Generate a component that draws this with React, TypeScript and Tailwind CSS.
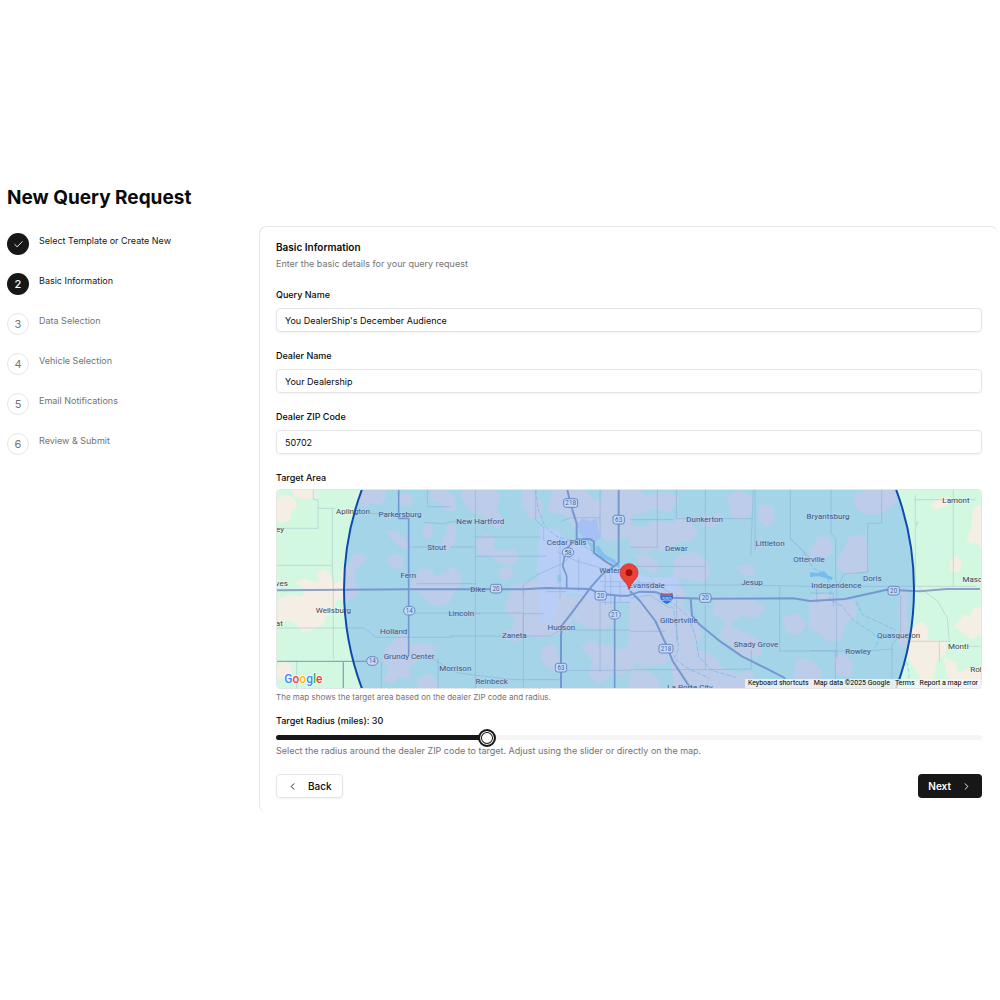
import { useState } from 'react'
import { Check, ChevronLeft, ChevronRight } from 'lucide-react'

type StepStatus = 'done' | 'current' | 'todo'

interface Step {
  id: number
  title: string
  status: StepStatus
}

const STEPS: Step[] = [
  { id: 1, title: 'Select Template or Create New', status: 'done' },
  { id: 2, title: 'Basic Information', status: 'current' },
  { id: 3, title: 'Data Selection', status: 'todo' },
  { id: 4, title: 'Vehicle Selection', status: 'todo' },
  { id: 5, title: 'Email Notifications', status: 'todo' },
  { id: 6, title: 'Review & Submit', status: 'todo' },
]

const MIN_RADIUS = 1
const MAX_RADIUS = 100

// Map geometry is in map units, three to a screen pixel
const UNITS_PER_MILE = 28.5

const TOWNS: [string, number, number][] = [
  ['Aplington', 249, 86],
  ['Parkersburg', 390, 96],
  ['Stout', 500, 196],
  ['Fern', 415, 280],
  ['Wellsburg', 190, 383],
  ['Holland', 371, 448],
  ['Grundy Center', 417, 523],
  ['Morrison', 556, 557],
  ['ey', 30, 140],
  ['ves', 35, 302],
  ['at', 28, 424],
  ['New Hartford', 631, 116],
  ['Cedar Falls', 890, 180],
  ['Waterloo', 1036, 264],
  ['Dike', 624, 320],
  ['Lincoln', 574, 392],
  ['Hudson', 874, 435],
  ['Zaneta', 733, 459],
  ['Reinbeck', 665, 597],
  ['Dunkerton', 1304, 110],
  ['Dewar', 1219, 198],
  ['Evansdale', 1130, 310],
  ['Gilbertville', 1226, 415],
  ['Jesup', 1446, 299],
  ['Littleton', 1500, 182],
  ['Otterville', 1617, 232],
  ['Shady Grove', 1458, 485],
  ['La Porte City', 1260, 614],
  ['Bryantsburg', 1674, 103],
  ['Independence', 1699, 310],
  ['Doris', 1807, 288],
  ['Quasqueton', 1886, 460],
  ['Rowley', 1764, 507],
  ['Lamont', 2058, 54],
  ['Masonville', 2135, 290],
  ['Monti', 2065, 493],
  ['Robinson', 2151, 561],
]

const SHIELDS: [string, number, number, boolean][] = [
  ['14', 418, 377, true],
  ['14', 307, 528, true],
  ['20', 678, 311, false],
  ['218', 902, 54, false],
  ['63', 1046, 104, false],
  ['58', 894, 202, true],
  ['20', 992, 332, false],
  ['21', 1034, 389, true],
  ['63', 873, 548, false],
  ['20', 1306, 339, false],
  ['218', 1188, 491, false],
  ['20', 1871, 317, false],
]

const FARMLAND = [
  'M20 45l25-12 25 8 8 22-16 14-4 26-22 8-16-6z',
  'M66 15h62l8 18-28 8-30-8z',
  'M82 292l20-8 36 10 14-8-8-22 20-8 16 16 4 22 22 2 12-12-4-28 22-14 14-30 26-6 12 16-22 20-14 14-2 40 16 16-12 24-24 8-34-4-6 36-22 14-10 26-36 18-24 4-22-28-26-8-22 10v-68l34-12 38 4 6-28z',
  'M20 552l22-20 18 8 2 34-42 4z',
  'M262 28l34-13h46l4 22-18 20-26-6-14 14-24-14z',
  'M352 140l28 2 26 24 4 22-22-6-24-24z',
  'M360 214l30-4 10 18-8 22-30-8-8-14z',
  'M380 42l26-18 22 16-8 22-30-4z',
  'M482 20l34-5 36 22 4 40-32-6-18-22-22-4z',
  'M462 130l18-10 6 28-14 12-12-14z',
  'M540 118l16 8-4 44-20 24-14-18 10-30z',
  'M454 252l28 4 14 24 28-16 34 4 6 36-20 26-8 22-34 10-30-14-18-24-40-16 22-28z',
  'M348 492l34-30 14-20 24 22-4 18 48-6 34 14-24 22-32 10-24 26-4 32-28-8-20 22-24-10 18-38-22-20z',
  'M444 580l34-10 26 26v14h-60z',
  'M580 15h92l16 20-12 38 26 36-20 20-38-34-46-24-24-40z',
  'M620 168l28-20 26 16-8 28 32 8 28-6 20 20-16 24-40-4-26-24-36-4z',
  'M540 250l22 6 10 28-12 26-20 4z',
  'M690 258l24-10 14 16-16 20-20-6z',
  'M760 20l34-5 22 50-8 38-30-10-22-34z',
  'M850 15h90l34 34 84-16v40l26 20-10 60-64 14-30-36-66-4-24-40-54-10z',
  'M726 304l82-18 70 30 30 48-8 66-52 20-44 6-40-14-44 6 18-48-32-22 10-36z',
  'M700 440l44-4 24 14-30 16-42-6z',
  'M822 490l28-12 14 40-6 36-30-12-14-30z',
  'M900 340l70-6 60 24 14 44-40 30-50-6-40-24z',
  'M938 486l20-16 28 10 38 2 30 18 26-14 10 60-36 22-28-14-18 28-24 10-24-22 12-42z',
  'M1000 15h96l34 20 60-14 34 18-24 38-60-8-40 18-58 8-44-30z',
  'M1080 124l42 6 34-20 54 10 18-24 36 22 18 22-18 26-50 6-18 26-44-8-24 12-48-20z',
  'M1214 220l58-16 34 20 14 38-20 28-52-12-38 4z',
  'M1082 294l50-14 90 6 20 40-6 44 36 30 20 44-8 34-54 20-44 34-62 10-48-20z',
  'M1086 552l40 6 36 24 4 28h-86z',
  'M1100 210l34 4 32 26-12 22-40-14z',
  'M1376 34l34-16 36 22-6 44-22 22-32-14z',
  'M1302 90l24 10 20-14 6 24-34 14-24-14z',
  'M1336 346l44-10 60 8 44 22-20 30-48-6-40 22-46-28z',
  'M1204 480l74 10 50 24 30 40 42 14 44-4 14 46h-244z',
  'M1370 416l40 24 54 26 10 40-50 14-42-44-34-24z',
  'M1402 250l34-10 18 20-24 12z',
  'M1474 60l34 8 4 42-24 12-22-28z',
  'M1540 400l38-14 28 30-18 30-36-4z',
  'M1620 200l28-44 28 4 10 34-20 26-38 12z',
  'M1620 340l40-14 40 14 52 12 4 40-32 22-16 54-36-4-28-24-24-10z',
  'M1722 196l20-40 42-4 10 40-6 64-54 12-36-30z',
  'M1756 30l40-15h76l8 32-22 20-26 16-34 4-40-20z',
  'M1690 520l34-10 22 30-6 32-38-4z',
  'M1580 522l44 6 30 30-8 50h-76z',
  'M1896 318l14 6-4 60 4 46 16 34-22 22-18-10 6-50-6-40z',
  'M1914 470l22-46 20-12 18 24-8 28 60 8-2 36-24 12-12 56-26 24-22-48-22-32z',
  'M1984 64l24-22 28-4-4 22-36 10z',
  'M2092 162l14-26 6-66 16-6 5 4v120l-20-24-10 10z',
  'M2040 236l18-22 14 16-4 26-22 2z',
  'M2056 424l28-34 16 10 12-28 21-4v76l-30 16-14-12z',
  'M2024 520l30 14 10 32 44-18 25 12v50h-70l-28-40z',
]

const COUNTY_ROADS = [
  'M20 130h124V70h52',
  'M130 15v28l14 2v26',
  'M187 70v180l3 50v222',
  'M20 241h166',
  'M300 86h90',
  'M20 429h262l36 28h230',
  'M418 186h54',
  'M440 296h180',
  'M418 384h144',
  'M80 530v80M334 530v80',
  'M504 520v90M472 15v50h70',
  'M460 112l58 4 40-8',
  'M616 15v595',
  'M616 156h195M540 186h76M616 214h214',
  'M760 386h60M540 386h90M760 312v140',
  'M540 384h220v225',
  'M540 453h300l30-18',
  'M490 523l70 40 60 8 110 13h142',
  'M760 330v-30l40-30 80-36 20-20',
  'M797 15v90l24 22 0 40M872 110l30-12h88v60',
  'M860 200l60 28 90 26M926 220v100M830 320h60M870 160v180',
  'M990 15v96M872 435h210M872 556h208M990 320v240',
  'M1006 270v90M1022 270v90M1050 290v60M990 290h80M990 352h90M1000 304h70',
  'M1162 15v174M1080 187h82M1080 244h226M1080 104h130',
  'M1219 15v86h230M1306 15v305M1455 15v180',
  'M1306 360v196M1220 330v140M1082 439h104',
  'M1132 300h300l187 4',
  'M1080 554h220l144-2v-56M1450 15l-8 200M1529 304v194',
  'M1080 340l60-10 60 40M1080 294h70l50 28',
  'M1561 15v146l52 50 20 24M1529 498h260l80-6',
  'M1620 304h500M1683 15v130l14 16v130',
  'M1700 290v230M1793 115v146l-70 6-20 36M1793 115h42V15',
  'M1620 497h76v112M1620 324h70v40M1640 304v50',
  'M1936 30v90l8-10-8 20v175M1936 44h180',
  'M2050 15v290M1920 469h118M2038 469l-6-70-30-52-56-40',
  'M2008 469v60M1866 610V480l16-20 10-20v-110M2090 484h40',
]

const RIVERS = [
  'M797 15l8 60 20 50 36 30 56 16 40 20 50 40 50 20 50 40 60 40 50 30 40 36 20 60 10 60 40 40 70 20',
  'M950 170l30 24 20 34 30 10 14 30',
  'M1170 340l40 30 8 50 8 70-14 30 48 34 60 26',
  'M1560 160l40 40 30 50 40 20 14 44-6 30 40 20 30 40 60 40 20 20-14 24',
  'M1758 350l20 40 50 22 50 24',
  'M1910 530l8 40-12 40',
]

function TownMap({ radius }: { radius: number }) {
  return (
    <svg
      viewBox="21 15 2112 594"
      preserveAspectRatio="xMidYMid slice"
      className="block h-full w-full"
      role="img"
      aria-label="Target area map"
    >
      <rect x="-2000" y="-500" width="6000" height="1700" fill="#d3f8e2" />
      <g fill="#f5eee4" stroke="#f5eee4" strokeWidth="6" strokeLinejoin="round">
        {FARMLAND.map((d) => (
          <path key={d} d={d} />
        ))}
      </g>

      {/* Cedar Falls / Waterloo built-up area */}
      <path
        d="M812 126l50 10 40 40 50-8 40 44 30 10 60 24 50 30h90v44h-70l-60 30-100 4-70-30-56 4-14 84h-42v-100l-10-60z"
        fill="#eef0f8"
      />
      <path d="M936 100l24 8 22-8 6 60-16 14-24-10-20-20-6-26z" fill="#d2dbf5" />
      <path d="M862 270h12v20h-12zM952 168l30 16 30 30-10 14-34-22z" fill="#b8ead6" />
      <path d="M1620 262l24 2 18-6 14 14 12 4-2 10-22-8-18-4-26 2z" fill="#8fd8ef" />
      <path d="M984 180l18 28 32 16 18 20-6 2-24-16-28-14-14-24z" fill="#9fdcee" />

      <g fill="none" stroke="#93d5e4" strokeWidth="3" strokeDasharray="14 5" opacity="0.8">
        {RIVERS.map((d) => (
          <path key={d} d={d} />
        ))}
      </g>
      <g fill="none" stroke="#a9bfc8" strokeWidth="2" opacity="0.8">
        {COUNTY_ROADS.map((d) => (
          <path key={d} d={d} />
        ))}
      </g>

      <g fill="none" stroke="#90a3c2" strokeWidth="6" strokeLinejoin="round">
        <path d="M20 316l400-3h340l70-4 130 3 30 14 60 6h25l35-12 50 2 40 16 106 3 264-1 50 8 105-6 125-28 100 5 80-7h100" />
        <path d="M386 15v85h30v412" strokeWidth="5" />
        <path d="M20 529h200v80M220 529h68" strokeWidth="4" />
        <path d="M892 15l12 50 16 50v48l40-1 12 8v34l36 26 22 14" />
        <path d="M1046 15v218l-18 14-32 22-32 36-60 80-28 36-3 30v158" />
        <path d="M920 163l-34 30-4 30-4 20 12 30v36" strokeWidth="5" />
        <path d="M1034 332v277" strokeWidth="5" />
        <path d="M1080 318l30 30 46 60 32 70 20 50 46 70 12 12" />
        <path d="M1262 342l4 50 20 24 60 50 70 48 80 40 50 26" />
      </g>

      {/* Interstate 380 */}
      <path d="M1171 329q19 5 38 0 4 18-19 28-23-10-19-28z" fill="#2f6bc5" />
      <path d="M1172 323q18 5 36 0v7q-18 4-36 0z" fill="#d0485a" />
      <text x="1190" y="347" fontSize="18" fill="#fff" textAnchor="middle" className="font-['Roboto',sans-serif]">
        380
      </text>

      {SHIELDS.map(([label, x, y, round]) => {
        const width = label.length > 2 ? 42 : 34
        return (
          <g key={`${label}-${x}`}>
            <rect
              x={x - width / 2}
              y={y - 13}
              width={width}
              height="26"
              rx={round ? 13 : 7}
              fill="#ffffff"
              stroke="#7c8aa6"
              strokeWidth="3"
            />
            <text
              x={x}
              y={y + 7}
              fontSize="19"
              fill="#4b5568"
              textAnchor="middle"
              className="font-['Roboto',sans-serif]"
            >
              {label}
            </text>
          </g>
        )
      })}

      <g
        fontSize="24"
        fill="#3f4148"
        stroke="#ffffff"
        strokeOpacity="0.35"
        strokeWidth="4"
        paintOrder="stroke"
        textAnchor="middle"
        className="font-['Roboto',sans-serif]"
      >
        {TOWNS.map(([name, x, y]) => (
          <text key={name} x={x} y={y}>
            {name}
          </text>
        ))}
      </g>

      <circle
        cx="1077"
        cy="312"
        r={radius * UNITS_PER_MILE}
        fill="#3b82f6"
        fillOpacity="0.3"
        stroke="#0f4aab"
        strokeWidth="6"
      />

      {/* Dealer pin */}
      <path
        d="M1077 314c-4-24-27-30-27-51a27 27 0 0 1 54 0c0 21-23 27-27 51z"
        fill="#ea4335"
        stroke="#c5221f"
        strokeWidth="2"
      />
      <circle cx="1077" cy="263" r="10" fill="#a50e0e" />

      <text
        x="43"
        y="594"
        fontSize="36"
        fontWeight="500"
        stroke="#ffffff"
        strokeWidth="4"
        paintOrder="stroke"
        className="font-['Roboto',sans-serif]"
      >
        <tspan fill="#4285f4">G</tspan>
        <tspan fill="#ea4335">o</tspan>
        <tspan fill="#fbbc05">o</tspan>
        <tspan fill="#4285f4">g</tspan>
        <tspan fill="#34a853">l</tspan>
        <tspan fill="#ea4335">e</tspan>
      </text>
    </svg>
  )
}

function StepMarker({ step }: { step: Step }) {
  if (step.status === 'todo') {
    return (
      <span className="flex size-[22px] shrink-0 items-center justify-center rounded-full border border-neutral-200 text-[11px] text-neutral-500">
        {step.id}
      </span>
    )
  }
  return (
    <span className="flex size-[22px] shrink-0 items-center justify-center rounded-full bg-neutral-900 text-[11px] font-medium text-white">
      {step.status === 'done' ? <Check className="size-[11px]" strokeWidth={2} /> : step.id}
    </span>
  )
}

interface FieldProps {
  id: string
  label: string
  value: string
  onChange: (value: string) => void
}

function Field({ id, label, value, onChange }: FieldProps) {
  return (
    <div className="flex flex-col gap-[5px]">
      <label htmlFor={id} className="text-[9px] leading-4 font-medium">
        {label}
      </label>
      <input
        id={id}
        type="text"
        value={value}
        onChange={(e) => onChange(e.target.value)}
        className="h-6 w-full rounded border border-neutral-200 px-2 text-[9px] shadow-xs outline-none"
      />
    </div>
  )
}

export default function App() {
  const [queryName, setQueryName] = useState("You DealerShip's December Audience")
  const [dealerName, setDealerName] = useState('Your Dealership')
  const [zipCode, setZipCode] = useState('50702')
  const [radius, setRadius] = useState(30)

  const filled = ((radius - MIN_RADIUS) / (MAX_RADIUS - MIN_RADIUS)) * 100

  return (
    <div className="min-h-screen bg-white pt-[184px] pr-0.5 pl-[7px] font-['Inter',sans-serif] text-neutral-950">
      <h1 className="text-[19px] leading-7 font-bold">New Query Request</h1>

      <div className="mt-3.5 flex items-start">
        <nav aria-label="Progress" className="w-[252px] shrink-0 pt-[7px]">
          <ol className="flex flex-col gap-[18px]">
            {STEPS.map((step) => (
              <li key={step.id} className="flex items-start gap-2.5">
                <StepMarker step={step} />
                <span
                  className={
                    step.status === 'todo'
                      ? 'text-[9px] leading-4 text-neutral-500'
                      : 'text-[9px] leading-4 text-neutral-900'
                  }
                >
                  {step.title}
                </span>
              </li>
            ))}
          </ol>
        </nav>

        <main className="min-w-0 flex-1 rounded-lg border-t border-l border-neutral-200 px-4 pt-3 pb-[15px]">
          <h2 className="text-[10px] leading-4 font-semibold">Basic Information</h2>
          <p className="mt-px text-[9px] leading-4 text-neutral-500">Enter the basic details for your query request</p>

          <form className="mt-[15px]" onSubmit={(e) => e.preventDefault()}>
            <div className="flex flex-col gap-4">
              <Field id="query-name" label="Query Name" value={queryName} onChange={setQueryName} />
              <Field id="dealer-name" label="Dealer Name" value={dealerName} onChange={setDealerName} />
              <Field id="zip-code" label="Dealer ZIP Code" value={zipCode} onChange={setZipCode} />
            </div>

            <h3 className="mt-4 text-[9px] leading-4 font-medium">Target Area</h3>
            <div className="relative mt-[3px] h-[200px] overflow-hidden rounded border border-neutral-200">
              <TownMap radius={radius} />
              <div className="absolute right-0 bottom-0 flex h-[9px] items-center gap-[5px] bg-neutral-100/80 px-[3px] font-['Roboto',sans-serif] text-[7px] leading-none text-black">
                <button type="button">Keyboard shortcuts</button>
                <span>Map data ©2025 Google</span>
                <a href="#terms">Terms</a>
                <a href="#report">Report a map error</a>
              </div>
            </div>
            <p className="text-[8px] leading-4 text-neutral-500">
              The map shows the target area based on the dealer ZIP code and radius.
            </p>

            <label htmlFor="radius" className="mt-2 block text-[9px] leading-4 font-medium">
              Target Radius (miles): {radius}
            </label>
            <input
              id="radius"
              type="range"
              min={MIN_RADIUS}
              max={MAX_RADIUS}
              value={radius}
              onChange={(e) => setRadius(Number(e.target.value))}
              style={{ backgroundImage: `linear-gradient(to right, #171717 ${filled}%, #f5f5f5 ${filled}%)` }}
              className="mt-1.5 block h-[5px] w-full appearance-none rounded-full outline-none [&::-webkit-slider-thumb]:size-[18px] [&::-webkit-slider-thumb]:appearance-none [&::-webkit-slider-thumb]:rounded-full [&::-webkit-slider-thumb]:border-2 [&::-webkit-slider-thumb]:border-neutral-900 [&::-webkit-slider-thumb]:bg-white [&::-webkit-slider-thumb]:shadow-[inset_0_0_0_1px_#fff,inset_0_0_0_2px_#171717]"
            />
            <p className="mt-[3px] text-[9px] leading-4 text-neutral-500">
              Select the radius around the dealer ZIP code to target. Adjust using the slider or directly on the map.
            </p>

            <div className="mt-[15px] flex justify-between">
              <button
                type="button"
                className="flex h-6 items-center gap-2.5 rounded border border-neutral-200 px-2.5 text-[10px] font-medium shadow-xs"
              >
                <ChevronLeft className="size-[11px]" />
                Back
              </button>
              <button
                type="submit"
                className="flex h-6 items-center gap-2.5 rounded bg-neutral-900 px-2.5 text-[10px] font-semibold text-white"
              >
                Next
                <ChevronRight className="size-[11px]" />
              </button>
            </div>
          </form>
        </main>
      </div>
    </div>
  )
}
